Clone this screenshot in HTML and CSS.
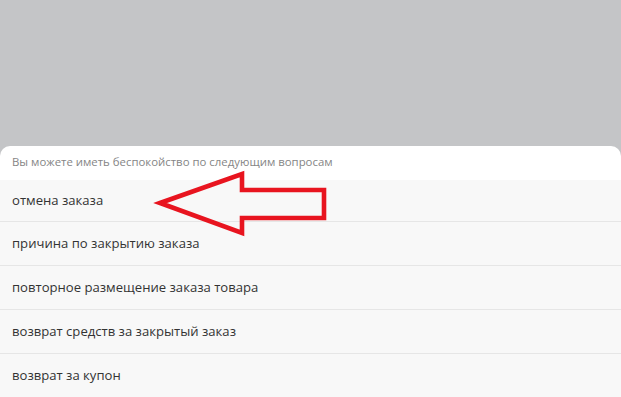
FILE: index.html
```html
<!DOCTYPE html>
<html>
<head>
    <title>Вопросы</title>
    <meta name="viewport" content="width=device-width, initial-scale=1.0">
    <link rel="stylesheet" href="styles.css">
</head>
<body>
<div class="backdrop"></div>
<div class="sheet">
    <div class="sheet-title">Вы можете иметь беспокойство по следующим вопросам</div>
    <ul class="question-list">
        <li class="question">отмена заказа</li>
        <li class="question">причина по закрытию заказа</li>
        <li class="question">повторное размещение заказа товара</li>
        <li class="question">возврат средств за закрытый заказ</li>
        <li class="question">возврат за купон</li>
    </ul>
    <svg class="pointer" width="180" height="70" viewBox="150 170 180 70">
        <polygon points="160,203 242,174 242,190 324,190 324,218 242,218 242,233"
                 fill="none" stroke="#e8141f" stroke-width="4.6" stroke-linejoin="miter"/>
    </svg>
</div>
</body>
</html>
```

FILE: styles.css
```css
body { margin: 0; background: #c4c5c7; font-family: "Open Sans", Arial, sans-serif; overflow: hidden; }
.backdrop { height: 146px; }
.sheet { position: relative; background: #fff; border-radius: 10px 10px 0 0; height: 251px; }
.sheet-title { height: 34px; line-height: 32px; padding-left: 12px; font-size: 11.4px; color: #858585; }
.question-list { list-style: none; margin: 0; padding: 0; background: #f8f8f8; }
.question { height: 43px; line-height: 42px; padding-left: 12px; font-size: 13.1px; color: #333; border-bottom: 1px solid #e6e6e6; }
.question:first-child { height: 41px; line-height: 41px; }
.pointer { position: absolute; left: 150px; top: 24px; }
```
